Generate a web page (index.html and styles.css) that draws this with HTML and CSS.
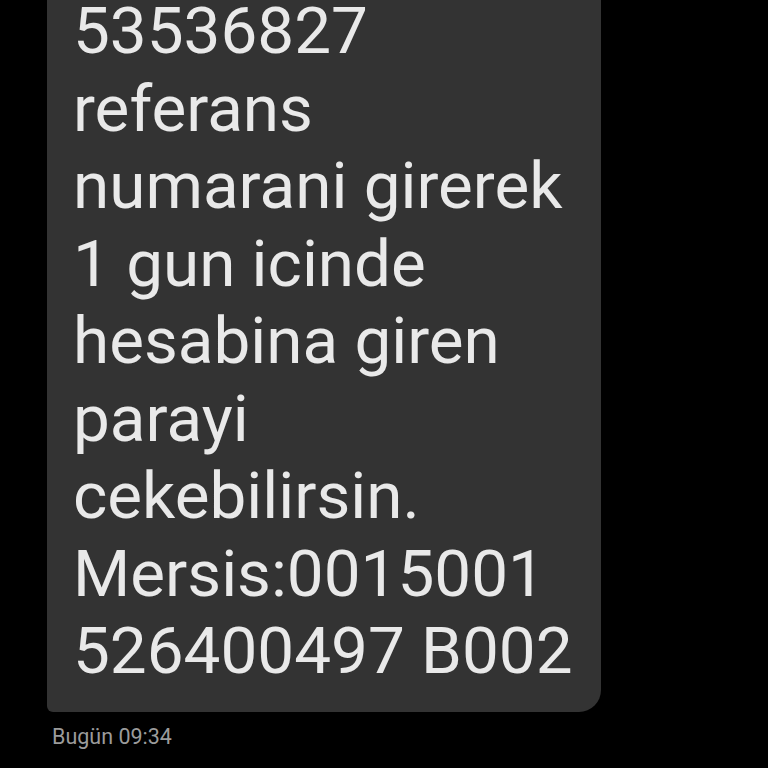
FILE: index.html
```html
<!DOCTYPE html>
<html lang="tr">
<head>
<meta charset="utf-8">
<link rel="stylesheet" href="styles.css">
</head>
<body>
<div class="thread">
  <div class="bubble">
    <p class="msg">53536827<br>referans<br>numarani girerek<br>1 gun icinde<br>hesabina giren<br>parayi<br>cekebilirsin.<br>Mersis:0015001<br>526400497 B002</p>
  </div>
  <div class="time">Bugün 09:34</div>
</div>
</body>
</html>
```
FILE: styles.css
```css
html, body {
  margin: 0;
  padding: 0;
  background: #000;
  height: 100%;
  overflow: hidden;
}
.thread {
  padding-left: 47px;
  display: flex;
  flex-direction: column;
  align-items: flex-start;
}
.bubble {
  width: 554px;
  box-sizing: border-box;
  background: #333333;
  margin-top: -8px;
  padding: 0 18px 22px 26px;
  border-radius: 0 0 22px 6px;
}
.msg {
  margin: 0;
  font-family: Roboto, "Noto Sans", sans-serif;
  font-size: 65.6px;
  line-height: 77.5px;
  color: #e9e9e9;
  white-space: nowrap;
}
.time {
  margin-top: 13px;
  margin-left: 5px;
  font-family: Roboto, "Noto Sans", sans-serif;
  font-size: 21.5px;
  line-height: 24px;
  color: #9b9b9b;
}
```
